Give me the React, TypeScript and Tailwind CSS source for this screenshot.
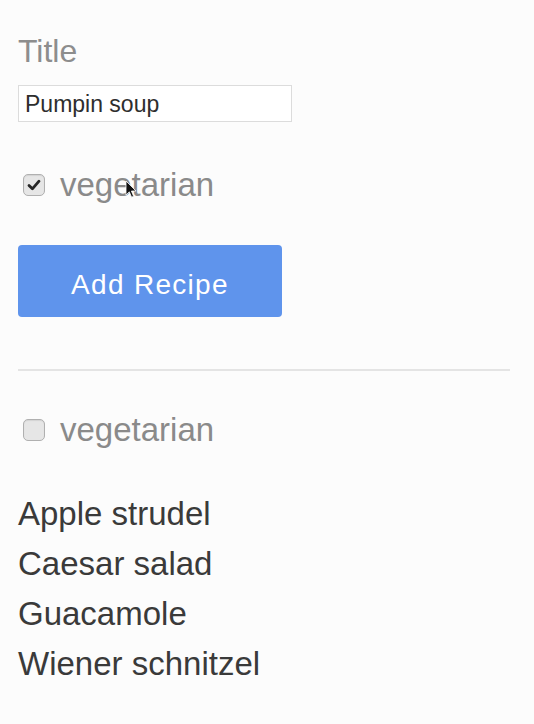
import { useState } from "react";

const recipes = [
  { name: "Apple strudel", vegetarian: true },
  { name: "Caesar salad", vegetarian: false },
  { name: "Guacamole", vegetarian: true },
  { name: "Wiener schnitzel", vegetarian: false },
];

function Box({ checked }: { checked: boolean }) {
  return (
    <span className="flex h-[22px] w-[22px] items-center justify-center rounded-[5px] border border-[#b0b0b0] bg-[#e6e6e6] shadow-[inset_0_1px_1px_rgba(0,0,0,0.08)]">
      {checked && (
        <svg viewBox="0 0 16 16" className="h-[16px] w-[16px]">
          <path d="M3 8.4 L6.4 11.8 L13 4.2" fill="none" stroke="#262626" strokeWidth="2.8" strokeLinecap="round" strokeLinejoin="round" />
        </svg>
      )}
    </span>
  );
}

export default function App() {
  const [title, setTitle] = useState("Pumpin soup");
  const [veg, setVeg] = useState(true);
  const [onlyVeg, setOnlyVeg] = useState(false);

  const shown = onlyVeg ? recipes.filter((r) => r.vegetarian) : recipes;

  return (
    <div className="min-h-[724px] w-[534px] bg-[#fcfcfc] pl-[18px] pr-[24px] pt-[31px] font-['Liberation_Sans',Arial,sans-serif]">
      <div className="text-[32px] leading-[40px] text-[#8d8d8d]">Title</div>

      <input
        value={title}
        onChange={(e) => setTitle(e.target.value)}
        className="mt-[14px] block h-[37px] w-[274px] border border-[#dcdcdc] bg-white px-[6px] pt-[2px] text-[23px] text-[#2e2e2e] outline-none"
      />

      {/* form checkbox */}
      <label className="relative mt-[43px] flex h-[40px] cursor-pointer items-center" onClick={() => setVeg(!veg)}>
        <span className="ml-[5px]">
          <Box checked={veg} />
        </span>
        <span className="ml-[15px] text-[33px] leading-[40px] text-[#8a8a8a]">vegetarian</span>
        {/* mouse pointer */}
        <svg viewBox="0 0 12 19" className="absolute left-[107px] top-[15px] h-[19px] w-[12px]">
          <path d="M1 1 L1 15 L4.3 11.8 L6.6 17.2 L8.6 16.3 L6.4 11 L11 11 Z" fill="#111" stroke="#fff" strokeWidth="0.8" />
        </svg>
      </label>

      <button className="mt-[40px] flex h-[72px] w-[264px] items-center justify-center rounded-[4px] bg-[#5f94ec] pt-[8px] text-[28px] tracking-[1.3px] text-white">
        Add Recipe
      </button>

      <div className="mt-[52px] h-[2px] w-full bg-[#e4e4e4]" />

      {/* filter */}
      <label className="mt-[39px] flex h-[40px] cursor-pointer items-center" onClick={() => setOnlyVeg(!onlyVeg)}>
        <span className="ml-[5px]">
          <Box checked={onlyVeg} />
        </span>
        <span className="ml-[15px] text-[33px] leading-[40px] text-[#8a8a8a]">vegetarian</span>
      </label>

      <ul className="mt-[39px]">
        {shown.map((r) => (
          <li key={r.name} className="text-[33px] leading-[50px] text-[#3a3a3a]">
            {r.name}
          </li>
        ))}
      </ul>
    </div>
  );
}
